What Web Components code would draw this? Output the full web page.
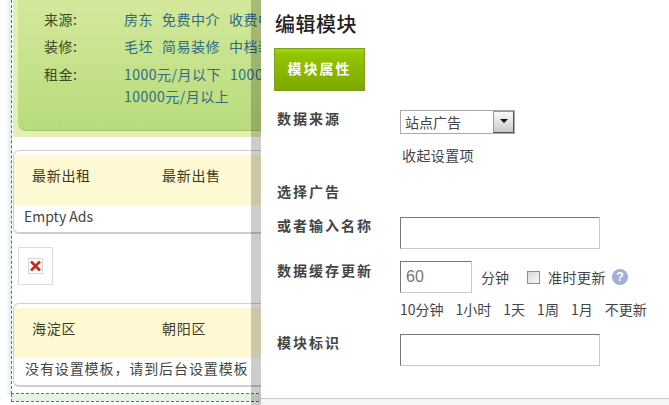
<!DOCTYPE html>
<html lang="zh">
<head>
<meta charset="utf-8">
<title>编辑模块</title>
<style>
  html, body { margin: 0; padding: 0; background: #fff; }
  body { width: 669px; height: 405px; overflow: hidden; font-family: "Noto Sans CJK SC", "Liberation Sans", sans-serif; }
</style>
</head>
<body>
<page-shell>
  <filter-panel></filter-panel>
  <tab-card first="最新出租" second="最新出售">Empty Ads</tab-card>
  <broken-image></broken-image>
  <tab-card class="second" first="海淀区" second="朝阳区">没有设置模板，请到后台设置模板</tab-card>
</page-shell>
<edit-panel></edit-panel>

<script>
const FONT = '"Noto Sans CJK SC", "Liberation Sans", sans-serif';

class PageShell extends HTMLElement {
    constructor(){
        super()
        this.attachShadow({mode: 'open'}).innerHTML = `
    <style>
        :host{
            display: block;
            width: 669px;
            height: 405px;
            overflow: hidden;
            box-sizing: border-box;
            padding-left: 7px;
            font-family: ${FONT};
        }
        .gutter{
            height: 394px;
            padding-left: 4px;
            background: linear-gradient(90deg, #f3fbf8, #d3ecec);
            background-size: 5px 100%;
            background-repeat: no-repeat;
        }
        .zone{
            height: 394px;
            box-sizing: border-box;
            border-left: 1px dashed #1f8d96;
            border-bottom: 1px dashed #1f8d96;
            padding-left: 1px;
            background: #fff;
        }
        .next{
            height: 7px;
            margin-left: 4px;
            background: #e6f3e4;
            border-bottom: 1px dashed #1f8d96;
            border-left: 1px dashed #1f8d96;
        }
    </style>
    <div class="gutter"><div class="zone"><slot></slot></div></div>
    <div class="next"></div>`
    }
}

class FilterRow extends HTMLElement {
    constructor(){
        super()
        this.attachShadow({mode: 'open'}).innerHTML = `
    <style>
        :host{
            display: grid;
            grid-template-columns: 80px 1fr;
            font-size: 14px;
            line-height: 22px;
            letter-spacing: .5px;
            color: #3d4a22;
        }
        .vals{
            color: #2f6b86;
            width: 137px;
            overflow: hidden;
            white-space: nowrap;
        }
        ::slotted(span){
            margin-right: 9px;
        }
    </style>
    <div>${this.getAttribute('label')}</div>
    <div class="vals"><slot></slot></div>`
    }
}

class FilterPanel extends HTMLElement {
    constructor(){
        super()
        this.attachShadow({mode: 'open'}).innerHTML = `
    <style>
        :host{
            display: block;
            height: 137px;
            box-sizing: border-box;
            padding: 0 0 6px 5px;
            background: #e3efb4;
        }
        .box{
            height: 131px;
            box-sizing: border-box;
            padding: 8px 0 0 26px;
            border-radius: 0 0 0 8px;
            background: linear-gradient(#d4e89c, #b7dc7a);
            border-bottom: 1px solid #a5c96a;
            display: flex;
            flex-direction: column;
            gap: 5px;
            width: 300px;
        }
        .rent{
            margin-top: 1px;
        }
        .line{
            margin: 12px 0 0 -8px;
            border-top: 1px dashed #c4de93;
        }
    </style>
    <div class="box">
        <filter-row label="来源:"><span>房东</span><span>免费中介</span><span>收费中</span></filter-row>
        <filter-row label="装修:"><span>毛坯</span><span>简易装修</span><span>中档装</span></filter-row>
        <filter-row class="rent" label="租金:"><span>1000元/月以下</span><span>1000</span><br>10000元/月以上</filter-row>
        <div class="line"></div>
    </div>`
    }
}

class TabCard extends HTMLElement {
    constructor(){
        super()
        this.attachShadow({mode: 'open'}).innerHTML = `
    <style>
        :host{
            display: block;
            width: 300px;
            height: 84px;
            box-sizing: border-box;
            margin-top: 13px;
            padding-top: 4px;
            border: 1px solid #cfcfcf;
            border-width: 1px 0 2px 1px;
            border-radius: 6px 0 0 6px;
            background: #fff;
        }
        :host(.second){
            margin-top: 18px;
        }
        .tabs{
            display: grid;
            grid-template-columns: 130px 130px;
            height: 50px;
            box-sizing: border-box;
            padding: 0 0 10px 18px;
            align-items: center;
            background: #fff9d3;
            font-size: 14px;
            letter-spacing: .7px;
            color: #3f3a22;
        }
        .body{
            padding-left: 10px;
            font-size: 14px;
            line-height: 23px;
            color: #444;
            white-space: nowrap;
        }
        :host(.second) .body{
            padding-left: 11px;
            line-height: 20px;
            letter-spacing: .9px;
        }
    </style>
    <div class="tabs">
        <span>${this.getAttribute('first')}</span>
        <span>${this.getAttribute('second')}</span>
    </div>
    <div class="body"><slot></slot></div>`
    }
}

class BrokenImage extends HTMLElement {
    constructor(){
        super()
        this.attachShadow({mode: 'open'}).innerHTML = `
    <style>
        :host{
            display: flex;
            align-items: center;
            justify-content: center;
            width: 35px;
            height: 38px;
            box-sizing: border-box;
            margin: 13px 0 0 5px;
            border: 1px solid #ddd;
        }
    </style>
    <svg width="15" height="16" viewBox="0 0 15 16">
        <rect x=".5" y=".5" width="14" height="15" fill="#fff" stroke="#d4d4d4"/>
        <path d="M3 3.5 L12 12.5 M12 3.5 L3 12.5" stroke="#cc2a20" stroke-width="2.6" fill="none"/>
    </svg>`
    }
}

class FormRow extends HTMLElement {
    constructor(){
        super()
        this.attachShadow({mode: 'open'}).innerHTML = `
    <style>
        :host{
            display: grid;
            grid-template-columns: 123px 1fr;
            align-items: start;
            font-size: 14px;
            color: #444;
        }
        .label{
            font-weight: 700;
            letter-spacing: 2px;
            line-height: 16px;
            white-space: nowrap;
        }
        :host(.low) .label{
            padding-top: 1px;
        }
    </style>
    <div class="label">${this.getAttribute('label')}</div>
    <div><slot></slot></div>`
    }
}

class TextBox extends HTMLElement {
    constructor(){
        super()
        const w = this.getAttribute('width') || '200'
        this.attachShadow({mode: 'open'}).innerHTML = `
    <style>
        :host{
            display: inline-block;
            vertical-align: top;
        }
        input{
            display: block;
            width: ${w}px;
            height: 32px;
            box-sizing: border-box;
            margin: 0;
            padding: 0 5px;
            outline: none;
            border: 1px solid #c8c8c8;
            border-top-color: #777;
            border-left-color: #777;
            background: #fff;
            font: 16px "Liberation Sans", sans-serif;
            color: #777;
        }
    </style>
    <input type="text" value="${this.getAttribute('value') || ''}">`
    }
}

class SourceSelect extends HTMLElement {
    constructor(){
        super()
        this.attachShadow({mode: 'open'}).innerHTML = `
    <style>
        :host{
            display: flex;
            width: 115px;
            height: 24px;
            box-sizing: border-box;
            border: 1px solid #a9a9a9;
            background: #fff;
            font-size: 14px;
            line-height: 22px;
            color: #444;
        }
        .text{
            flex: 1;
            padding-left: 4px;
        }
        .arrow{
            width: 21px;
            box-sizing: border-box;
            border: 1px solid #555;
            border-top-color: #999;
            border-left-color: #999;
            background: linear-gradient(#fafafa, #c9c9c9);
            display: flex;
            align-items: center;
            justify-content: center;
        }
        .arrow i{
            margin-top: -2px;
            border: 4px solid transparent;
            border-top: 4px solid #111;
            border-bottom: 0;
        }
    </style>
    <div class="text">站点广告</div>
    <div class="arrow"><i></i></div>`
    }
}

class EditPanel extends HTMLElement {
    constructor(){
        super()
        this.attachShadow({mode: 'open'}).innerHTML = `
    <style>
        :host{
            position: absolute;
            left: 251px;
            top: 0;
            width: 418px;
            height: 405px;
            box-sizing: border-box;
            border-left: 10px solid rgba(0, 0, 0, .2);
            background: #f5f5f5;
            background-clip: padding-box;
            font-family: ${FONT};
            display: block;
        }
        .main{
            height: 399px;
            box-sizing: border-box;
            padding: 9px 0 0 13px;
            background: #fff;
            border-bottom: 1px solid #ccc;
        }
        h2{
            margin: 0 0 0 1px;
            font-size: 20px;
            line-height: 30px;
            font-weight: 500;
            letter-spacing: .5px;
            color: #222;
        }
        .btn{
            width: 91px;
            height: 43px;
            margin-top: 9px;
            box-sizing: border-box;
            border: 1px solid #7c9e1e;
            background: linear-gradient(#a8d60c, #93c600 12%, #7ea800);
            color: #fff;
            font-size: 14px;
            font-weight: 700;
            letter-spacing: 2px;
            line-height: 39px;
            text-align: center;
        }
        .form{
            padding-left: 3px;
        }
        .hint{
            margin: 11px 0 0 2px;
            font-size: 14px;
            line-height: 20px;
            color: #444;
            letter-spacing: .4px;
        }
        .cache{
            display: flex;
            align-items: center;
            height: 32px;
            font-size: 14px;
            color: #444;
            white-space: nowrap;
        }
        .cache .min{
            margin-left: 9px;
        }
        .on-time{
            letter-spacing: .5px;
        }
        .check{
            appearance: none;
            width: 13px;
            height: 13px;
            box-sizing: border-box;
            margin: 0 8px 0 18px;
            border: 1px solid #8e8e8e;
            background: linear-gradient(135deg, #d8d8d8, #f8f8f8);
        }
        .help{
            width: 16px;
            height: 16px;
            margin-left: 6px;
            border-radius: 50%;
            background: #a3aedb;
            color: #fff;
            font: 700 13px/16px "Liberation Sans", sans-serif;
            text-align: center;
        }
        .quick{
            display: flex;
            margin-top: 6px;
            font-size: 14px;
            line-height: 20px;
            color: #444;
            white-space: nowrap;
        }
        .quick span{
            margin-right: 12px;
        }
    </style>
    <div class="main">
        <h2>编辑模块</h2>
        <div class="btn">模块属性</div>
        <div class="form">
            <form-row label="数据来源" style="margin-top:19px">
                <source-select></source-select>
                <div class="hint">收起设置项</div>
            </form-row>
            <form-row label="选择广告" style="margin-top:18px"></form-row>
            <form-row label="或者输入名称" style="margin-top:18px"><text-box></text-box></form-row>
            <form-row class="low" label="数据缓存更新" style="margin-top:12px">
                <div class="cache">
                    <text-box width="72" value="60"></text-box>
                    <span class="min">分钟</span>
                    <input class="check" type="checkbox">
                    <span class="on-time">准时更新</span>
                    <span class="help">?</span>
                </div>
                <div class="quick">
                    <span>10分钟</span><span>1小时</span><span>1天</span><span>1周</span><span>1月</span><span>不更新</span>
                </div>
            </form-row>
            <form-row label="模块标识" style="margin-top:15px"><text-box></text-box></form-row>
        </div>
    </div>`
    }
}

window.customElements.define('page-shell', PageShell);
window.customElements.define('filter-row', FilterRow);
window.customElements.define('filter-panel', FilterPanel);
window.customElements.define('tab-card', TabCard);
window.customElements.define('broken-image', BrokenImage);
window.customElements.define('form-row', FormRow);
window.customElements.define('text-box', TextBox);
window.customElements.define('source-select', SourceSelect);
window.customElements.define('edit-panel', EditPanel);
</script>
</body>
</html>
